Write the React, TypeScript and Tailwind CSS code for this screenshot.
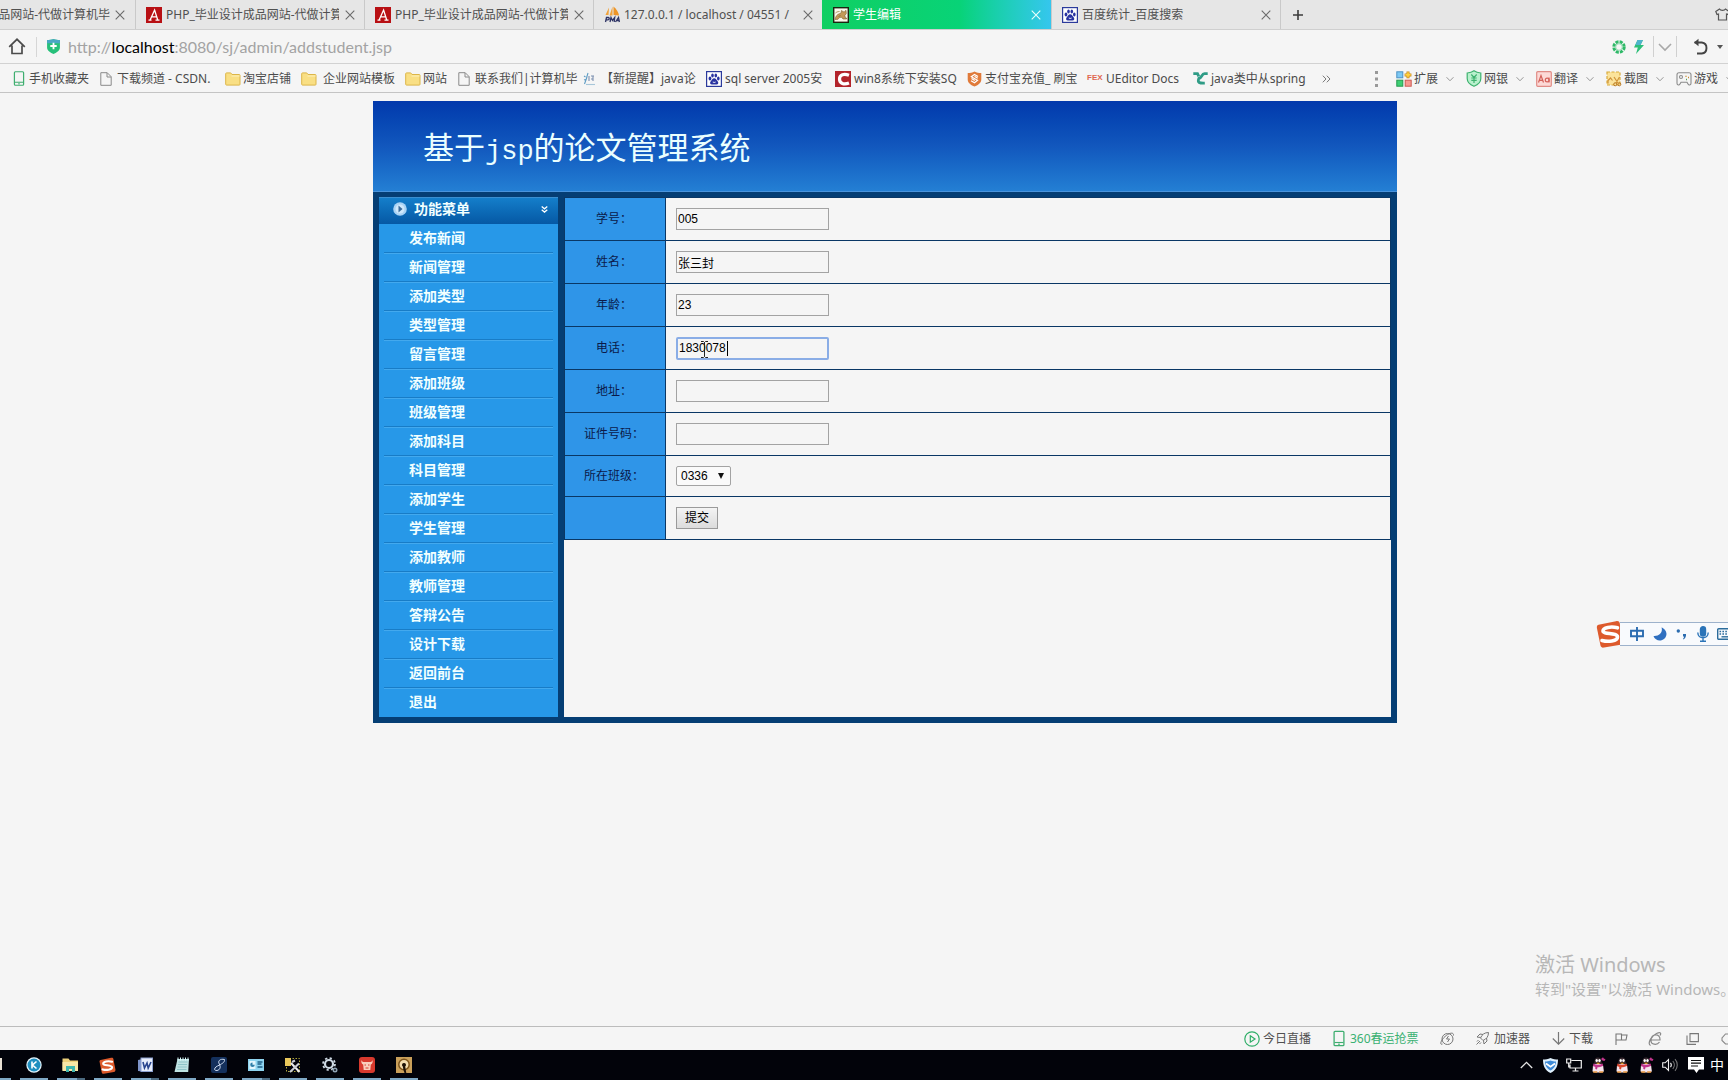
import type { ReactNode } from "react";

const UI_FONT = "font-['Noto_Sans','Noto_Sans_CJK_SC',sans-serif]";
const PAGE_FONT = "font-['Liberation_Sans','Noto_Sans_CJK_SC',sans-serif]";

/* ---------- small drawings ---------- */

function CloseIcon({ stroke = "#6b6b6b" }: { stroke?: string }) {
  return (
    <svg width="10" height="10" viewBox="0 0 10 10" fill="none" stroke={stroke} strokeWidth="1.1">
      <path d="M.7.7l8.6 8.6M9.3.7L.7 9.3" />
    </svg>
  );
}

function RedA() {
  return (
    <svg width="16" height="16" viewBox="0 0 16 16">
      <rect width="16" height="16" fill="#b81014" />
      <path d="M2.5 13.2h3M9.5 13.2h4M4 13.2L8.6 3l3.2 10.2M5.4 9.8h5" stroke="#fff" strokeWidth="1.3" fill="none" />
    </svg>
  );
}

function PmaIcon() {
  return (
    <svg width="17" height="17" viewBox="0 0 17 17">
      <path d="M5 1.500L1.500 9h3zM8.500.5L5.500 9.500H8.500z" fill="#f0a23a" />
      <path d="M9.500.5c3 2.500 5 5.500 5.500 9l-5.500-.5z" fill="#ee9526" />
      <path d="M1.500 16l1-4.500h1.800c1.400 0 1.200 2.300-.4 2.300H2.300M6 16l1-4.500 1.500 3 2.200-3L10.200 16M11.500 16l3-4.500.9 4.500M12.700 14.500h2.500" fill="none" stroke="#2f3566" strokeWidth="1.300" />
    </svg>
  );
}

function TomcatIcon() {
  return (
    <svg width="16" height="16" viewBox="0 0 16 16">
      <rect x=".7" y=".7" width="14.6" height="14.6" fill="#faf8ec" stroke="#1b2410" strokeWidth="1.4" />
      <path d="M2 12.500c.5-3 2-5.200 5-6l1.200-.8L8.500 3.500l1.700 1.200h1.300L13 3.300l.3 3.200-1.500 2 .7 2.500h1v1H10l-1.500-1.800-2 .3-1.500 1.800z" fill="#c49a58" stroke="#7c6030" strokeWidth=".6" />
      <path d="M2.500 6c1.500-1.200 2.500-1.500 4-1.500" stroke="#a3823f" strokeWidth=".9" fill="none" />
      <path d="M5.500 9.500l2-1" stroke="#8a6a34" strokeWidth=".8" />
    </svg>
  );
}

function PawIcon() {
  return (
    <svg width="16" height="16" viewBox="0 0 16 16">
      <rect x=".6" y=".6" width="14.800" height="14.800" fill="#fff" stroke="#2b3a9c" strokeWidth="1.200" />
      <g fill="#2832a0">
        <ellipse cx="4" cy="7.500" rx="1.400" ry="1.900" />
        <ellipse cx="6.500" cy="4.500" rx="1.300" ry="1.900" />
        <ellipse cx="9.800" cy="4.500" rx="1.300" ry="1.900" />
        <ellipse cx="12.300" cy="7.500" rx="1.300" ry="1.900" />
        <path d="M8.200 7.300c1.800 0 2.200 1.900 3.400 3 1.300 1.300.7 3.400-1.200 3.300-1.500-.1-3-.1-4.400 0-1.900.1-2.500-2-1.200-3.300 1.200-1.100 1.600-3 3.400-3z" />
      </g>
      <path d="M7.200 10.500v1h2v-1" stroke="#fff" strokeWidth=".7" fill="none" />
    </svg>
  );
}

function PhoneIcon({ tall = false }: { tall?: boolean }) {
  return (
    <svg width="12" height={tall ? 17 : 15} viewBox="0 0 12 16" fill="none" stroke="#3fae70">
      <rect x="1.100" y=".8" width="9.800" height="14.400" rx="1" strokeWidth="1.300" />
      <path d="M1.500 12h9" strokeWidth="1.100" />
      <path d="M5 13.700h2" />
    </svg>
  );
}

function PageIcon() {
  return (
    <svg width="12" height="14" viewBox="0 0 12 14" fill="none" stroke="#8a8a8a" strokeWidth="1">
      <path d="M.8.7h6.400l4 4v8.600H.8z" />
      <path d="M7 .8V5h4" />
    </svg>
  );
}

function FolderIcon() {
  return (
    <svg width="16" height="14" viewBox="0 0 16 14">
      <path d="M.7 1.700c0-.5.300-.8.800-.8h4.200l1.300 1.600h7.200c.500 0 .8.300.8.800v9c0 .500-.3.800-.8.800H1.500c-.5 0-.8-.3-.8-.8z" fill="#f9df84" stroke="#dcb548" strokeWidth="1" />
      <path d="M6.500 4h8" stroke="#fdf0bb" />
    </svg>
  );
}

function ReminderIcon() {
  return (
    <svg width="13" height="14" viewBox="0 0 13 14" fill="none" strokeWidth="1.100">
      <path d="M1 4l1.500 1M1 8l1.500-.5M1.500 12L4 5M5 1L3.500 6" stroke="#5e9cc4" />
      <path d="M6 4v5M8 4h3M8 7h2.500M10 4v5" stroke="#7b8faf" />
      <path d="M3 12.500h9" stroke="#a7c6d9" />
    </svg>
  );
}

function RedCIcon() {
  return (
    <svg width="16" height="16" viewBox="0 0 16 16">
      <rect width="16" height="16" fill="#b3242b" />
      <path d="M14 4.200C9 2.300 4.500 3.500 4.500 8s4.500 6 9.500 4" fill="none" stroke="#fff" strokeWidth="3.200" />
    </svg>
  );
}

function OrangeShield() {
  return (
    <svg width="15" height="16" viewBox="0 0 15 16">
      <path d="M7.500.5C9.500 1.700 12 2 14.300 2v6.500c0 3.500-3.500 5.800-6.800 7-3.300-1.200-6.800-3.500-6.800-7V2C3 2 5.500 1.700 7.500.5z" fill="#e07a3a" />
      <path d="M11 5.500L7.500 3.500 4.300 5.700l6.200 3.600-3 2.500L4 9.800M4.500 7.500l3.300 2M7.500 5.300l3.200 1.900" fill="none" stroke="#fff" strokeWidth="1.200" />
    </svg>
  );
}

function JavaIcon() {
  return (
    <svg width="15" height="13" viewBox="0 0 15 13" fill="none" stroke="#2f9c86" strokeWidth="2.800">
      <path d="M.3 1.700h4.200l1.300 2.600" />
      <path d="M14.700 1.700h-3.200C8.500 1.700 9 6 5.800 6.500c-1.600 4.300.7 4.800 6 4.600" />
    </svg>
  );
}

function Chevron({ size = 9, stroke = "#8a8a8a" }: { size?: number; stroke?: string }) {
  return (
    <svg width={size} height={size} viewBox="0 0 10 10" fill="none" stroke={stroke} strokeWidth="1.100">
      <path d="M.7 2.800L5 7.200l4.300-4.400" />
    </svg>
  );
}

function ExtensionIcon() {
  return (
    <svg width="16" height="16" viewBox="0 0 16 16">
      <rect x=".8" y=".8" width="6" height="6" fill="#7cc9f4" stroke="#4d92c4" />
      <path d="M12 .5v6.800M8.600 3.900h6.800" stroke="#c8861a" strokeWidth="3" />
      <path d="M12 1.200v5.400M9.300 3.900h5.400" stroke="#ffd23e" strokeWidth="1.600" />
      <rect x=".8" y="9.200" width="6" height="6" fill="#3fcf74" stroke="#249a4e" />
      <rect x="9.200" y="9.200" width="6" height="6" fill="#f79a92" stroke="#cc5c55" />
    </svg>
  );
}

function BankIcon() {
  return (
    <svg width="16" height="17" viewBox="0 0 16 17" fill="none" stroke="#3eb26f" strokeWidth="1.200">
      <path d="M8 .8c2 1.400 4.500 2 6.800 2.200v5.500c0 4-3.600 6.500-6.800 7.800-3.200-1.300-6.800-3.800-6.800-7.800V3C3.500 2.800 6 2.200 8 .8z" fill="#b9f0cd" />
      <path d="M5.300 4.500L8 7.500l2.700-3M8 7.500V13M5.300 8h5.400M5.300 10.300h5.400" />
    </svg>
  );
}

function TranslateIcon() {
  return (
    <svg width="16" height="16" viewBox="0 0 16 16" fill="none" stroke="#d4615a" strokeWidth="1.200">
      <rect x=".7" y=".7" width="14.600" height="14.600" rx="1" fill="#fcd9d6" stroke="#e08c86" />
      <path d="M2.500 11.500L5 4.500l2.500 7M3.500 9.300h3" />
      <path d="M13 6.500v5" />
      <circle cx="11.200" cy="9" r="1.900" />
    </svg>
  );
}

function ShotIcon() {
  return (
    <svg width="16" height="16" viewBox="0 0 16 16" fill="none">
      <rect x="1" y="1" width="13" height="13" fill="#fbe39b" stroke="#d9ab3c" strokeDasharray="3 1.500" strokeWidth="1.200" />
      <path d="M2 12.500V9.500L4.500 7l2 2.500M8 6l4 6M13.500 6l-3.500 6" stroke="#cf9238" strokeWidth="1.200" />
      <circle cx="9.200" cy="13.300" r="1.500" stroke="#b8741b" />
      <circle cx="13.300" cy="13.300" r="1.500" stroke="#b8741b" />
    </svg>
  );
}

function GameIcon() {
  return (
    <svg width="16" height="14" viewBox="0 0 16 14" fill="none" stroke="#8b8b8b" strokeWidth="1.100">
      <path d="M3 .8h10c1.200 0 2 .8 2 2v8.500c0 2-2.200 2.200-3 .7l-1-1.800H5L4 12c-.8 1.500-3 1.300-3-.7V2.800c0-1.200.8-2 2-2z" />
      <circle cx="5" cy="5" r="1.500" />
      <path d="M10 3.800v1M12 5.500h1" stroke="#c98b2c" strokeWidth="1.500" />
      <path d="M10 7.500h1" stroke="#5aa05a" strokeWidth="1.300" />
    </svg>
  );
}

/* ---------- browser chrome ---------- */

type TabInfo = { title: string; icon: ReactNode; active?: boolean };

const tabs: TabInfo[] = [
  { title: "PHP_毕业设计成品网站-代做计算", icon: <RedA /> },
  { title: "PHP_毕业设计成品网站-代做计算", icon: <RedA /> },
  { title: "127.0.0.1 / localhost / 04551 /", icon: <PmaIcon /> },
  { title: "学生编辑", icon: <TomcatIcon />, active: true },
  { title: "百度统计_百度搜索", icon: <PawIcon /> },
];

function TabBar() {
  return (
    <div className="flex h-[30px] items-stretch overflow-hidden border-b border-[#cfcfcf] bg-[#e6e6e6] text-xs text-[#505050]">
      <button className="flex w-[135px] shrink-0 items-center">
        <span className="flex w-[110px] justify-end overflow-hidden whitespace-nowrap">品网站-代做计算机毕</span>
        <span className="ml-[5px]"><CloseIcon /></span>
      </button>
      {tabs.map((t, i) => (
        <button
          key={i}
          className={
            t.active
              ? "flex w-[229px] shrink-0 items-center bg-linear-to-r from-[#10cf62] via-[#08d377] via-60% to-[#35c6ee] pr-[10px] pl-[11px] text-white"
              : "flex w-[229px] shrink-0 items-center border-l border-[#c9c9c9] pr-[9px] pl-[10px]"
          }
        >
          <span className="flex w-5 shrink-0">{t.icon}</span>
          <span className="w-[173px] shrink-0 overflow-hidden text-left whitespace-nowrap">{t.title}</span>
          <span className="ml-auto"><CloseIcon stroke={t.active ? "#e9fffb" : "#6b6b6b"} /></span>
        </button>
      ))}
      <button aria-label="新标签页" className="flex items-center border-l border-[#c9c9c9] pl-3">
        <svg width="10" height="10" viewBox="0 0 10 10" stroke="#3c3c3c" strokeWidth="1.600"><path d="M5 0v10M0 5h10" /></svg>
      </button>
      <button aria-label="皮肤" className="ml-auto flex w-[13px] items-center overflow-hidden">
        <svg className="shrink-0" width="15" height="13" viewBox="0 0 15 13" fill="none" stroke="#555" strokeWidth="1.200">
          <path d="M4.500 1L.8 3.500 2 6.500l1.500-.5v6h8V6l1.500.5 1.200-3L10.500 1c-1 1.800-5 1.800-6 0z" />
        </svg>
      </button>
    </div>
  );
}

function AddressBar() {
  return (
    <div className="flex h-[34px] items-center border-b border-[#d2d2d2] pl-2">
      <button aria-label="主页">
        <svg width="18" height="17" viewBox="0 0 18 17" fill="none" stroke="#4c4c4c" strokeWidth="1.700">
          <path d="M1.200 8.800L9 1.300l7.800 7.500M4 7.500v8h10v-8" />
        </svg>
      </button>
      <span className="mx-[10px] h-5 w-px bg-[#d6d6d6]" />
      <svg width="13" height="15" viewBox="0 0 12 14">
        <path d="M6 0c1.500.8 3.800 1 6 1v7c0 3-3.500 5-6 6-2.500-1-6-3-6-6V1c2.200 0 4.500-.2 6-1z" fill="#27c07a" />
        <path d="M0 1c2.200 0 4.500-.2 6-1 1.500.8 3.800 1 6 1v3H0z" fill="#4aa7c4" />
        <path d="M6 3.500v6M3 6.500h6" stroke="#fff" strokeWidth="1.700" />
      </svg>
      <div className="ml-2 font-['Lato',sans-serif] text-base leading-5 whitespace-nowrap text-[#a3a3a3]">
        http://<span className="text-black">localhost</span>:8080/sj/admin/addstudent.jsp
      </div>
      <div className="ml-auto flex items-center">
        <svg width="14" height="14" viewBox="0 0 14 14" fill="none">
          <circle cx="7" cy="7" r="5.200" stroke="#2fb968" strokeWidth="3" strokeDasharray="3 1.080" />
          <circle cx="7" cy="7" r="3.300" stroke="#7ed6a2" strokeWidth=".8" />
        </svg>
        <svg className="ml-2" width="10" height="14" viewBox="0 0 10 14"><path d="M3.500 0H9L6.500 5H10L2 14l1.800-6.500H0z" fill="#2cbf78" /><path d="M3.500 0H9L6.500 5H1.400z" fill="#4fb3cc" /></svg>
        <span className="ml-[9px] h-[21px] w-px bg-[#d0d0d0]" />
        <span className="mx-1"><Chevron size={14} stroke="#a8a8a8" /></span>
        <span className="h-[21px] w-px bg-[#d0d0d0]" />
        <svg className="ml-4" width="15" height="17" viewBox="0 0 15 17" fill="none" stroke="#444" strokeWidth="1.900">
          <path d="M1.500 4.500h7.300c6.500.8 6 10.500 0 11H4" />
          <path d="M5.500.8L1 4.500l4.500 3.800z" fill="#444" stroke="none" />
        </svg>
        <svg className="mr-[5px] ml-[9px]" width="6" height="4" viewBox="0 0 6 4"><path d="M0 0h6L3 4z" fill="#555" /></svg>
      </div>
    </div>
  );
}

const bookmarks: { text: string; icon: ReactNode; item: string; slot: string }[] = [
  { text: "手机收藏夹", icon: <PhoneIcon />, item: "w-[87px]", slot: "w-4" },
  { text: "下载频道 - CSDN.", icon: <PageIcon />, item: "w-[125px]", slot: "w-[17px]" },
  { text: "淘宝店铺", icon: <FolderIcon />, item: "w-[76px]", slot: "w-[18px]" },
  { text: "企业网站模板", icon: <FolderIcon />, item: "w-[104px]", slot: "w-[22px]" },
  { text: "网站", icon: <FolderIcon />, item: "w-[53px]", slot: "w-[18px]" },
  { text: "联系我们|计算机毕", icon: <PageIcon />, item: "w-[125px]", slot: "w-[17px]" },
  { text: "【新提醒】java论", icon: <ReminderIcon />, item: "w-[123px]", slot: "w-[18px]" },
  { text: "sql server 2005安", icon: <PawIcon />, item: "w-[129px]", slot: "w-[19px]" },
  { text: "win8系统下安装SQ", icon: <RedCIcon />, item: "w-[132px]", slot: "w-[19px]" },
  { text: "支付宝充值_ 刷宝", icon: <OrangeShield />, item: "w-[120px]", slot: "w-[18px]" },
  { text: "UEditor Docs", icon: <span className="font-['Liberation_Sans',sans-serif] text-[8px] font-bold text-[#e0664e]">FEX</span>, item: "w-[106px]", slot: "w-[19px]" },
  { text: "java类中从spring", icon: <JavaIcon />, item: "w-[129px]", slot: "w-[18px]" },
];

const tools: { text: string; icon: ReactNode }[] = [
  { text: "扩展", icon: <ExtensionIcon /> },
  { text: "网银", icon: <BankIcon /> },
  { text: "翻译", icon: <TranslateIcon /> },
  { text: "截图", icon: <ShotIcon /> },
  { text: "游戏", icon: <GameIcon /> },
];

function BookmarkBar() {
  return (
    <div className="flex h-[29px] items-center overflow-hidden border-b border-[#c4c4c4] pt-px pl-[13px] text-xs text-[#4b4b4b]">
      {bookmarks.map((b) => (
        <a key={b.text} href="#" className={`flex shrink-0 items-center whitespace-nowrap ${b.item}`}>
          <span className={`flex shrink-0 items-center ${b.slot}`}>{b.icon}</span>
          {b.text}
        </a>
      ))}
      <button aria-label="更多书签">
        <svg width="9" height="8" viewBox="0 0 9 8" fill="none" stroke="#777"><path d="M.8.7L4 4 .8 7.300M4.800.7L8 4 4.800 7.300" /></svg>
      </button>
      <div className="ml-auto flex w-[353px] shrink-0 items-center overflow-hidden">
        <svg className="mr-[18px] shrink-0" width="3" height="16" viewBox="0 0 3 16" fill="#999"><path d="M0 0h3v3H0zM0 6.500h3v3H0zM0 13h3v3H0z" /></svg>
        {tools.map((t) => (
          <button key={t.text} className="flex w-[70px] shrink-0 items-center">
            <span className="flex w-[18px] shrink-0 items-center">{t.icon}</span>
            <span className="mr-2">{t.text}</span>
            <Chevron size={8} />
          </button>
        ))}
      </div>
    </div>
  );
}

/* ---------- web page ---------- */

const menu = [
  "发布新闻", "新闻管理", "添加类型", "类型管理", "留言管理", "添加班级", "班级管理", "添加科目", "科目管理",
  "添加学生", "学生管理", "添加教师", "教师管理", "答辩公告", "设计下载", "返回前台", "退出",
];

function Sidebar() {
  return (
    <nav className="w-[179px] shrink-0 bg-[#2798e8] text-sm font-bold text-[#f2ffff]">
      <div className="flex h-[27px] items-center bg-linear-to-b from-[#1580cc] to-[#0658a4] pr-[10px] pb-[3px] pl-[14px] shadow-[inset_0_1px_0_#3b8fd0]">
        <svg width="14" height="14" viewBox="0 0 14 14">
          <circle cx="7" cy="7" r="6.800" fill="#a9d3f5" />
          <circle cx="7" cy="7" r="4.500" fill="#cfe8fb" />
          <path d="M5.500 3.500L9.500 7l-4 3.500z" fill="#3a6c9c" />
        </svg>
        <span className="ml-[7px] leading-5">功能菜单</span>
        <svg className="ml-auto" width="7" height="7" viewBox="0 0 7 7" fill="none" stroke="#fff" strokeWidth="1.300"><path d="M.7.5l2.800 2.300L6.300.5M.7 3.800l2.800 2.300 2.800-2.300" /></svg>
      </div>
      <ul>
        {menu.map((m) => (
          <li key={m} className="group px-[5px]">
            <a href="#" className="block h-[29px] border-b border-[#187cc6] pl-[25px] leading-7 shadow-[0_1px_0_#43a9ee] group-last:border-transparent group-last:shadow-none">
              {m}
            </a>
          </li>
        ))}
      </ul>
    </nav>
  );
}

const fields = [
  { id: "sno", label: "学号：", value: "005" },
  { id: "sname", label: "姓名：", value: "张三封" },
  { id: "age", label: "年龄：", value: "23" },
  { id: "phone", label: "电话：", value: "1830078", focused: true },
  { id: "address", label: "地址：", value: "" },
  { id: "idcard", label: "证件号码：", value: "" },
];

const LABEL_CELL = "w-[101px] border border-[#0a3765] bg-[#2f95e8] pr-[2px] text-center font-normal text-[#0b1a4a]";
const VALUE_CELL = "border border-[#0a3765] pl-[10px]";

function StudentForm() {
  return (
    <form className="flex-1 bg-[#f5f5f5]" onSubmit={(e) => e.preventDefault()}>
      <table className="w-full border-collapse text-xs">
        <tbody>
          {fields.map((f) => (
            <tr key={f.id} className="h-[43px]">
              <th scope="row" className={LABEL_CELL}><label htmlFor={f.id}>{f.label}</label></th>
              <td className={VALUE_CELL}>
                <div className="relative flex w-[153px]">
                  <input
                    id={f.id}
                    type="text"
                    defaultValue={f.value}
                    className={
                      f.focused
                        ? "h-[23px] w-full rounded-xs border-2 border-[#8aade6] bg-[#f5f5f5] px-px text-black outline-none"
                        : "h-[22px] w-full border border-[#a3a3a3] bg-[#f5f5f5] px-px text-black outline-none"
                    }
                  />
                  {f.focused && (
                    <>
                      <span className="absolute top-1 left-[51px] h-[15px] w-px bg-black" />
                      <svg className="absolute top-1 left-[25px]" width="7" height="17" viewBox="0 0 7 17" fill="none" stroke="#222">
                        <path d="M0 .5h2.500l1 1 1-1H7M3.500 1.500v14M0 16.500h2.500l1-1 1 1H7" />
                      </svg>
                    </>
                  )}
                </div>
              </td>
            </tr>
          ))}
          <tr className="h-[41px]">
            <th scope="row" className={LABEL_CELL}><label htmlFor="classno">所在班级：</label></th>
            <td className={VALUE_CELL}>
              <div className="relative flex w-[55px] items-center">
                <select id="classno" className="h-5 w-full appearance-none rounded-xs border border-[#a3a3a3] bg-[#fafafa] pl-1 text-black">
                  <option>0336</option>
                </select>
                <svg className="pointer-events-none absolute right-[7px]" width="6" height="6" viewBox="0 0 6 6"><path d="M0 0h6L3 6z" fill="#111" /></svg>
              </div>
            </td>
          </tr>
          <tr className="h-[43px]">
            <th className={LABEL_CELL} />
            <td className={VALUE_CELL}>
              <button type="submit" className="block h-[22px] w-[42px] border border-[#9a9a9a] bg-linear-to-b from-[#f4f4f4] to-[#dcdcdc] text-xs leading-5 text-black">提交</button>
            </td>
          </tr>
        </tbody>
      </table>
    </form>
  );
}

function AdminPage() {
  return (
    <div className={`pt-2 pl-[42px] ${PAGE_FONT}`}>
      <div className="mx-auto max-w-[1024px]">
        <header className="flex h-[91px] items-center border-b border-[#4a94dc] bg-linear-to-b from-[#0339ac] via-[#1257bd] to-[#247fd4] pl-[50px]">
          <h1 className="pt-2 text-[31px] leading-10 whitespace-nowrap text-[#eaffff]">
            基于<span className="font-['Liberation_Mono',monospace] text-[27px]">jsp</span>的论文管理系统
          </h1>
        </header>
        <div className="flex gap-[6px] bg-[#053e74] px-[6px] pt-[5px] pb-[6px]">
          <Sidebar />
          <StudentForm />
        </div>
      </div>
    </div>
  );
}

/* ---------- overlays ---------- */

function SogouLogo({ size }: { size: number }) {
  return (
    <svg className="shrink-0" width={size} height={size} viewBox="0 0 28 28">
      <path d="M2.500 4.800L20 1.200c2.200-.4 3.300.2 3.700 2L27 20.500c.3 2.300-.6 3.700-2.500 4.200L8 27.600c-2 .3-3-.3-3.500-2L.9 8c-.2-1.700.2-2.800 1.600-3.200z" fill="#dd5a2c" />
      <path d="M21.500 7.800C15 6 7 7.500 7 11s14.500 1.500 14.500 6-10 5-15.500 3.500" fill="none" stroke="#fff" strokeWidth="3.600" strokeLinecap="round" />
    </svg>
  );
}

function ImeBar() {
  return (
    <div className="absolute top-[527px] right-0 flex w-[132px] items-center overflow-hidden">
      <SogouLogo size={28} />
      <div className="-ml-1 flex h-6 flex-1 items-center border-y border-[#9db2cc] bg-[#f8fafd] pl-[9px]">
        <svg className="shrink-0" width="16" height="14" viewBox="0 0 16 14" fill="none" stroke="#2b6cb0" strokeWidth="1.900"><path d="M2 3.800h12v5.400H2zM8 0v14" /></svg>
        <svg className="ml-2 shrink-0" width="14" height="14" viewBox="0 0 14 14"><path d="M8.500.5c1.500 4-1.500 9-8 8.500 2 6.500 12.500 6 13-2C13.500 4 11 1.200 8.500.5z" fill="#2f6fc0" /></svg>
        <svg className="ml-[9px] shrink-0" width="11" height="12" viewBox="0 0 11 12" fill="#2b6cb0"><circle cx="2.300" cy="3" r="1.700" /><path d="M7 6h3c.3 2.500-.7 4.500-2.500 5.500L7 10.700c.8-.7 1-1.400 1-2.200H7z" /></svg>
        <svg className="ml-[10px] shrink-0" width="12" height="16" viewBox="0 0 12 16" fill="none" stroke="#2b74b8" strokeWidth="1.400"><rect x="3.500" y=".7" width="5" height="9.300" rx="2.500" fill="#2b74b8" /><path d="M.8 6.500C.8 13.500 11.200 13.500 11.200 6.500M6 12v3M3 15.200h6" /></svg>
        <svg className="ml-2 shrink-0" width="16" height="12" viewBox="0 0 16 12" fill="none" stroke="#2b6c9c" strokeWidth="1.400"><rect x=".7" y=".7" width="14.600" height="10.600" rx="1" /><path d="M2.500 3.500h11M2.500 6h11" strokeDasharray="1.600 1.300" strokeWidth="1.600" /><path d="M4.500 8.800h7" /></svg>
      </div>
    </div>
  );
}

function Watermark() {
  return (
    <div className={`absolute right-0 bottom-[27px] w-[193px] whitespace-nowrap text-[#b7b7b7] ${UI_FONT}`}>
      <div className="text-xl leading-7">激活 Windows</div>
      <div className="text-[15px] leading-5">转到"设置"以激活 Windows。</div>
    </div>
  );
}

/* ---------- bottom bars ---------- */

function StatusBar() {
  return (
    <div className="flex h-6 items-center justify-end overflow-hidden border-t border-[#bcbcbc] text-xs text-[#505050]">
      <button className="flex w-[89px] shrink-0 items-center">
        <svg className="mr-[3px]" width="16" height="16" viewBox="0 0 16 16" fill="none" stroke="#2fae68" strokeWidth="1.200"><circle cx="8" cy="8" r="7.200" /><path d="M6.300 4.800L11 8l-4.700 3.200z" /></svg>
        今日直播
      </button>
      <button className="flex w-[107px] shrink-0 items-center text-[#39b172]">
        <span className="mr-[5px]"><PhoneIcon tall /></span>360春运抢票
      </button>
      <svg className="mr-[21px] shrink-0" width="15" height="14" viewBox="0 0 15 14" fill="none" stroke="#777"><circle cx="7.500" cy="7" r="5.500" /><path d="M8.500 4L6.500 7h3L7.500 10M2.500 12C-.5 13.500.5 8.500 5 4.500s9-4.500 8.500-1" /></svg>
      <button className="flex w-[76px] shrink-0 items-center">
        <svg className="mr-[5px]" width="13" height="13" viewBox="0 0 13 13" fill="none" stroke="#777"><path d="M12.500.5c-4 0-6.500 2-8 5.500l2.500 2.500c3.500-1.500 5.500-4 5.500-8zM4.500 5.500L1 5l3-3 3 .5M7.500 8.500L8 12l3-3-.5-3M4 9l-3.500 3.500M2.500 8L1 9.500M5 10.500L3.500 12" /></svg>
        加速器
      </button>
      <button className="flex w-[63px] shrink-0 items-center">
        <svg className="mr-1" width="13" height="13" viewBox="0 0 13 13" fill="none" stroke="#777" strokeWidth="1.200"><path d="M6.500 0v12M.8 6.500l5.700 5.700 5.700-5.700" /></svg>
        下载
      </button>
      <svg className="mr-[20px] shrink-0" width="13" height="12" viewBox="0 0 13 12" fill="none" stroke="#777" strokeWidth="1.100"><path d="M1 12V1h5.500v6H1M6.500 2H12l-1 5H6.500" /></svg>
      <svg className="mr-[24px] shrink-0" width="14" height="14" viewBox="0 0 14 14" fill="none" stroke="#888" strokeWidth="1.200"><path d="M3 8h9c.5-7-8.500-6.500-9 0-.3 5 6 5.500 8.500 2M2.500 13.500C-1 12 3 4 8.500 1.500c4-1.800 5-.5 3.500 2" /></svg>
      <svg className="mr-[22px] shrink-0" width="13" height="12" viewBox="0 0 13 12" fill="none" stroke="#777" strokeWidth="1.100"><path d="M4 .6h8.400v8H4zM1 2.500v8.900h9" /></svg>
      <svg className="shrink-0" width="7" height="12" viewBox="0 0 7 12" fill="none" stroke="#888" strokeWidth="1.100"><path d="M7 1H4.500L1 5v2.500L4.500 11H7" /></svg>
    </div>
  );
}

const taskIcons: { name: string; icon: ReactNode; multi?: boolean }[] = [
  { name: "酷狗", icon: <svg width="16" height="16" viewBox="0 0 16 16"><circle cx="8" cy="8" r="7.700" fill="#e6f6fd" /><circle cx="8" cy="8" r="6.500" fill="#1f8fc0" /><path d="M6 4.500v7M10.500 4.500L6.500 8l4 3.500" stroke="#fff" strokeWidth="1.600" fill="none" /></svg> },
  { name: "资源管理器", multi: true, icon: <svg width="17" height="16" viewBox="0 0 17 16"><path d="M.5 1.500h6l1.500 2h8v10H.5z" fill="#ecd07a" /><path d="M.5 5h15.500v9H.5z" fill="#f7e7a6" /><path d="M4 15V9h9v6h-3v-3H7v3z" fill="#3fb6ae" /></svg> },
  { name: "搜狗", icon: <SogouLogo size={17} /> },
  { name: "Word", multi: true, icon: <svg width="16" height="16" viewBox="0 0 16 16"><path d="M1 3l9-2v14l-9-1z" fill="#7d93c9" /><rect x="4" y="1" width="11.500" height="13.500" fill="#e8eefb" stroke="#8ea2d2" /><path d="M6 5l1.500 6L10 6l1.200 5L14 5" fill="none" stroke="#29458e" strokeWidth="1.600" /></svg> },
  { name: "记事本", icon: <svg width="16" height="16" viewBox="0 0 16 16"><path d="M3.500 2h11.500l-.8 13H.5z" fill="#bfe3e3" /><path d="M4.500 5h9M4 7.500h9M3.500 10h9.200M3 12.500h9.500" stroke="#8fc4c8" /><path d="M4 .5v3M6.500.5v3M9 .5v3M11.500.5v3M14 .5v3" stroke="#dff" /></svg> },
  { name: "编辑器", icon: <svg width="16" height="16" viewBox="0 0 16 16"><rect width="16" height="16" rx="2" fill="#14305c" /><path d="M13.500 2.500C9 1.500 6.500 4 8.300 7s.7 6-2.300 6.500-3.500-2.500.5-4.500S14 5.500 13.500 2.500z" fill="none" stroke="#cfdcf0" /></svg> },
  { name: "控制面板", multi: true, icon: <svg width="16" height="12" viewBox="0 0 16 12"><rect width="16" height="12" fill="#8fd4ef" /><rect x="1.500" y="2" width="6" height="8" fill="#e4f6fd" /><path d="M4.500 3.500a2.300 2.300 0 1 0 2.300 2.300H4.500z" fill="#2f7ea8" /><path d="M9.500 3h5M9.500 5h4M9.500 8h5" stroke="#1f5f88" strokeWidth="1.300" /></svg> },
  { name: "工具", icon: <svg width="16" height="16" viewBox="0 0 16 16" fill="none"><rect x="1.500" y="1.500" width="13" height="13" stroke="#b0a83c" strokeDasharray="1.500 1.500" /><path d="M0 1h6v8H0z" fill="#e9c75b" /><path d="M6 6l8.500 9" stroke="#eee" strokeWidth="2" /><path d="M14 6.500L5 15M7 5l3-1.500" stroke="#c9ccd2" strokeWidth="2" /></svg> },
  { name: "设置", icon: <svg width="16" height="16" viewBox="0 0 16 16" fill="none"><circle cx="7" cy="7" r="4" stroke="#cfdae4" strokeWidth="2.200" /><circle cx="7" cy="7" r="6" stroke="#cfdae4" strokeWidth="1.700" strokeDasharray="2.300 2.400" /><circle cx="13" cy="13" r="1.700" stroke="#8fa3b4" strokeWidth="1.600" /></svg> },
  { name: "红牛", icon: <svg width="16" height="16" viewBox="0 0 16 16"><rect width="16" height="16" rx="3" fill="#d8392d" /><path d="M2.500 3c.5 1.800 1.500 2 3 2h5c1.500 0 2.500-.2 3-2 .5 2.500-.2 4-1.700 4.500L11.300 13H4.700l-.5-5.500C2.700 7 2 5.500 2.500 3z" fill="#f9cdbb" /><path d="M5.500 8h1.500M9 8h1.500M6.500 11h3" stroke="#d8392d" /></svg> },
  { name: "图片", icon: <svg width="16" height="16" viewBox="0 0 16 16"><rect width="16" height="16" fill="#caa05a" /><circle cx="8" cy="7.500" r="5.200" fill="#f3ddb0" stroke="#7c531a" strokeWidth="1.500" /><path d="M8 6a2 2 0 0 0-1.200 3.600L7.500 13l1 3h1.800L9.200 9.600A2 2 0 0 0 8 6z" fill="#1d1208" /></svg> },
];

function Penguin({ scarf, bow = false }: { scarf: string; bow?: boolean }) {
  return (
    <svg width="15" height="16" viewBox="0 0 15 16">
      <path d="M7 .5C4.200.5 3.500 2.500 3.500 5L1.800 9v5h10.700V9L10.500 5C10.500 2.500 9.800.5 7 .5z" fill="#33262c" />
      <path d="M2 9.500L4 7h6.500l1.700 2.500L12.800 14c0 1-1.500 1.500-5.600 1.500S1.500 15 1.500 14z" fill="#f6e6ee" />
      <path d="M2.500 6.500c2.800 1.700 6.200 1.700 9 0l.7 2.300c-2.500 1.300-4 1.500-5.700 1.500L6 12.500 4.300 12V10L2 9z" fill={scarf} />
      <ellipse cx="5.700" cy="3.600" rx="1.200" ry="1.500" fill="#fff" />
      <ellipse cx="8.500" cy="3.600" rx="1.200" ry="1.500" fill="#fff" />
      <path d="M4.800 5.800h4.700L7.200 7.200z" fill="#f4a522" />
      <path d="M2.200 15h4M8.200 15h4" stroke="#e8963c" strokeWidth="1.400" />
      {bow && <path d="M10 2l2-1.700 1 1.500 1.500.2-1 2-2-.5z" fill={scarf} />}
    </svg>
  );
}

function TaskBar() {
  return (
    <div className="flex h-[30px] justify-between overflow-hidden bg-[#02030a]">
      <div className="flex">
        <span className="flex w-[15px] shrink-0 flex-col">
          <span className="mt-2 h-3 w-[2px] bg-[#e8e0d4]" />
          <span className="mt-auto h-[2px] w-[11px] bg-[#7fa9c6]" />
        </span>
        {taskIcons.map((t) => (
          <button key={t.name} aria-label={t.name} className="flex w-[37px] flex-col items-center">
            <span className="flex h-7 items-center pt-[2px]">{t.icon}</span>
            <span className="flex h-[2px] w-7">
              <span className="flex-1 bg-[#7fa9c6]" />
              {t.multi && <span className="w-2 bg-[#4c6a80]" />}
            </span>
          </button>
        ))}
      </div>
      <div className="flex items-center">
        <span className="flex w-6 justify-center"><svg width="13" height="8" viewBox="0 0 13 8" fill="none" stroke="#e6e6e6" strokeWidth="1.300"><path d="M.8 7l5.700-5.700L12.200 7" /></svg></span>
        <span className="flex w-6 justify-center"><svg width="15" height="15" viewBox="0 0 15 15"><path d="M7.500 0C10 1.200 12.500 1.500 15 1.500 15 8 13 12.500 7.500 15 2 12.500 0 8 0 1.500c2.500 0 5-.3 7.500-1.500z" fill="#dff0fc" /><path d="M2 3.500c2 0 3.500-.2 5.500-1 2 .8 3.500 1 5.500 1-.2 4-1.500 7-5.500 9-4-2-5.300-5-5.500-9z" fill="#3d8bd8" /><path d="M3 5.500l4.500 3.300L12 5.500" stroke="#fff" strokeWidth="1.700" fill="none" /></svg></span>
        <span className="flex w-6 justify-center"><svg width="16" height="14" viewBox="0 0 16 14" fill="none" stroke="#eee" strokeWidth="1.200"><path d="M5.500 2.500h9.800v7.500H4V6.500M6.500 13h6M9.500 10v3M.7 1h4v4h-4zM2.700 5v4H4" /></svg></span>
        <span className="flex w-6 justify-center"><Penguin scarf="#c2348c" bow /></span>
        <span className="flex w-6 justify-center"><Penguin scarf="#d8452c" /></span>
        <span className="flex w-6 justify-center"><Penguin scarf="#c2348c" bow /></span>
        <span className="flex w-6 justify-center"><svg width="16" height="14" viewBox="0 0 16 14" fill="none" stroke="#eee" strokeWidth="1.100"><path d="M.7 4.800h2.500L6.500 1.500v11L3.200 9.200H.7zM8.500 4.800c1 1.300 1 3.100 0 4.400" /><path d="M10.800 3c2 2.300 2 5.700 0 8M13 1.200c3 3.300 3 8.300 0 11.600" stroke="#777" /></svg></span>
        <span className="flex w-7 justify-center"><svg width="16" height="16" viewBox="0 0 16 16"><path d="M0 0h16v12.500h-5L8.500 16 6 12.500H0z" fill="#fff" /><path d="M3 3.500h10M3 6.200h10M3 9h7" stroke="#111" strokeWidth="1.200" /></svg></span>
        <span className="w-[18px] text-sm text-white">中</span>
      </div>
    </div>
  );
}

export default function App() {
  return (
    <div className={`flex min-h-screen flex-col overflow-hidden bg-[#f5f5f5] ${UI_FONT}`}>
      <TabBar />
      <AddressBar />
      <BookmarkBar />
      <main className="relative flex-1">
        <AdminPage />
        <ImeBar />
        <Watermark />
      </main>
      <StatusBar />
      <TaskBar />
    </div>
  );
}
